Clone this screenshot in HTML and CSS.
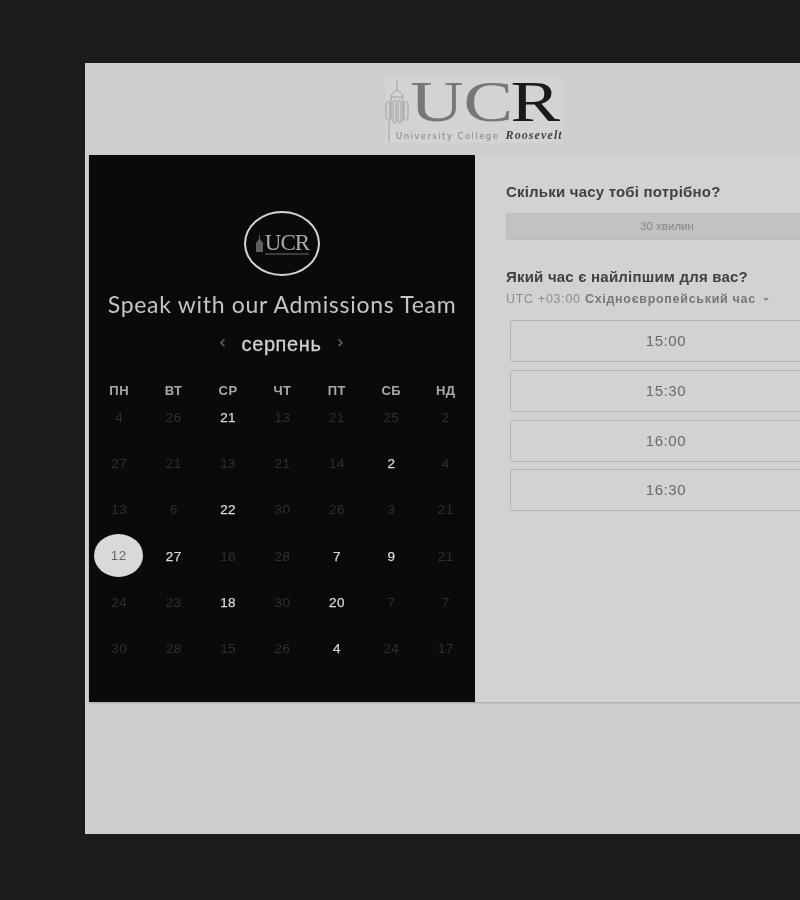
FILE: index.html
```html
<!DOCTYPE html>
<html lang="uk">
<head>
  <meta charset="UTF-8" />
  <title>Speak with our Admissions Team</title>
  <link rel="stylesheet" href="styles.css">
</head>
<body>

<div class="page">
  <div class="logo-bar">
    <div class="logo">
      <svg class="tower" width="24" height="66" viewBox="0 0 24 66" fill="none" stroke="#a0a0a0" stroke-width="1">
        <path d="M12 3V13M12 13C9 15 6 17 6 20V44M12 13C15 15 18 17 18 20V44M6 20H18"/>
        <path d="M1 28C1 23 5 23 5 28V40C5 44 1 44 1 40Z"/>
        <path d="M8 26C8 22 11 22 11 26V44C11 47 8 47 8 44Z"/>
        <path d="M13 26C13 22 16 22 16 26V44C16 47 13 47 13 44Z"/>
        <path d="M19 28C19 23 23 23 23 28V40C23 44 19 44 19 40Z"/>
        <path d="M4 44V65"/>
      </svg>
      <div class="logo-text">
        <div class="logo-letters"><span class="grey">UC</span><span class="dark">R</span></div>
        <div class="logo-sub">University College <em>Roosevelt</em></div>
      </div>
    </div>
  </div>

  <div class="card">
    <div class="left">
      <div class="badge">
        <svg class="badge-tower" width="9" height="18" viewBox="0 0 9 18" fill="#5f5f5f"><path d="M4 0H5V4L8 8V17H1V8L4 4Z"/></svg>
        <span class="badge-text">UCR</span>
      </div>
      <h2 class="team">Speak with our Admissions Team</h2>
      <div class="month">
        <span class="arrow">‹</span>
        <span class="month-name">серпень</span>
        <span class="arrow">›</span>
      </div>
      <div class="cal">
        <div class="dow">ПН</div><div class="dow">ВТ</div><div class="dow">СР</div><div class="dow">ЧТ</div><div class="dow">ПТ</div><div class="dow">СБ</div><div class="dow">НД</div>

        <div class="day">4</div><div class="day">26</div><div class="day on">21</div><div class="day">13</div><div class="day">21</div><div class="day">25</div><div class="day">2</div>
        <div class="day">27</div><div class="day">21</div><div class="day">13</div><div class="day">21</div><div class="day">14</div><div class="day on">2</div><div class="day">4</div>
        <div class="day">13</div><div class="day">6</div><div class="day on">22</div><div class="day">30</div><div class="day">26</div><div class="day">3</div><div class="day">21</div>
        <div class="day picked"><span>12</span></div><div class="day on">27</div><div class="day">16</div><div class="day">28</div><div class="day on">7</div><div class="day on">9</div><div class="day">21</div>
        <div class="day">24</div><div class="day">23</div><div class="day on">18</div><div class="day">30</div><div class="day on">20</div><div class="day">7</div><div class="day">7</div>
        <div class="day">30</div><div class="day">28</div><div class="day">15</div><div class="day">26</div><div class="day on">4</div><div class="day">24</div><div class="day">17</div>
      </div>
    </div>

    <div class="right">
      <h3 class="question">Скільки часу тобі потрібно?</h3>
      <div class="duration">30 хвилин</div>
      <h3 class="question second">Який час є найліпшим для вас?</h3>
      <div class="zone">UTC +03:00 <b>Східноєвропейський час</b><i class="caret"></i></div>
      <div class="times">
        <div class="time">15:00</div>
        <div class="time">15:30</div>
        <div class="time">16:00</div>
        <div class="time">16:30</div>
      </div>
    </div>
  </div>
</div>

</body>
</html>
```

FILE: styles.css
```css
html, body { margin: 0; height: 900px; overflow: hidden; }
body { background: #1c1c1c; font-family: "Liberation Sans", Arial, sans-serif; padding: 63px 0 0 85px; box-sizing: border-box; }

.page { width: 778px; height: 771px; background: #cecece; padding: 0 4px; box-sizing: border-box; filter: blur(0.5px); }

.logo-bar { height: 92px; display: flex; justify-content: center; padding-top: 14px; box-sizing: border-box; }
.logo { width: 178px; height: 66px; background: #d3d3d3; display: flex; }
.tower { flex: none; }
.logo-text { display: flex; flex-direction: column; margin-left: -13px; }
.logo-letters { font-family: "Liberation Serif", serif; font-size: 58px; line-height: 50px; height: 52px; padding-left: 14px; white-space: nowrap; transform: scaleX(1.28); transform-origin: 14px 0; }
.logo-letters .grey { color: #777; }
.logo-letters .dark { color: #1a1a1a; margin-left: -2px; }
.logo-sub { font-family: "DejaVu Sans", sans-serif; font-size: 8.5px; color: #858585; letter-spacing: 1.45px; line-height: 12px; white-space: nowrap; }
.logo-sub em { font-family: "Liberation Serif", serif; font-size: 12px; font-weight: bold; color: #444; letter-spacing: 1.1px; margin-left: 2px; }

.card { display: flex; height: 547px; box-shadow: 0 1px 2px rgba(0,0,0,0.2); }
.left { width: 386px; flex: none; background: #0a0a0a; padding-top: 56px; box-sizing: border-box; display: flex; flex-direction: column; align-items: center; }
.right { flex: 1; background: #d2d2d2; padding: 28px 0 0 31px; }

.badge { width: 72px; height: 61px; border: 2.5px solid #d4d4d4; border-radius: 50%; display: flex; align-items: center; justify-content: center; gap: 1px; }
.badge-text { font-family: "Liberation Serif", serif; font-size: 23px; line-height: 20px; color: #a9a9a9; letter-spacing: -1px; border-bottom: 2px solid #3c3c3c; }
.team { margin: 14px 0 0; font-family: Lato, sans-serif; font-weight: 400; font-size: 23px; line-height: 28px; color: #c4c4c4; letter-spacing: 0.7px; white-space: nowrap; }
.month { display: flex; align-items: center; gap: 15px; margin-top: 12px; height: 28px; padding-right: 1px; }
.month-name { font-size: 20px; color: #d0d0d0; letter-spacing: 0.6px; -webkit-text-stroke: 0.3px #d0d0d0; }
.arrow { font-size: 17px; line-height: 20px; color: #626262; width: 8px; margin-top: -4px; text-align: center; -webkit-text-stroke: 0.4px #626262; }

.cal { width: 381px; margin: 22px 0 0 1px; display: grid; grid-template-columns: repeat(7, 1fr); grid-template-rows: 21px repeat(6, 46.4px); }
.dow { font-size: 13px; font-weight: bold; color: #a8a8a8; text-align: center; line-height: 22px; letter-spacing: 0.5px; }
.day { font-size: 13.5px; letter-spacing: 0.4px; color: #303030; display: flex; align-items: center; justify-content: center; height: 28px; margin-top: 2px; }
.day.on { color: #d8d8d8; -webkit-text-stroke: 0.25px #d8d8d8; }
.day.picked span { width: 49px; height: 43px; border-radius: 50%; background: #d9d9d9; color: #666; display: flex; align-items: center; justify-content: center; flex: none; margin: -2px 0 0 -1px; }

.question { margin: 0; font-size: 15px; line-height: 18px; font-weight: bold; color: #414141; white-space: nowrap; letter-spacing: 0.2px; }
.question.second { margin-top: 28px; }
.duration { margin-top: 12px; height: 27px; width: 322px; background: #c2c2c2; border: 1px solid #bbb; border-radius: 3px; box-sizing: border-box; font-size: 11.5px; color: #858585; text-align: center; line-height: 25px; }
.zone { font-size: 12.5px; color: #8c8c8c; line-height: 16px; margin-top: 5px; white-space: nowrap; letter-spacing: 0.7px; }
.zone b { color: #777; }
.caret { display: inline-block; border: 3.5px solid transparent; border-top-color: #888; border-bottom: 0; margin: 0 0 2px 7px; }

.times { margin: 13px 0 0 4px; display: flex; flex-direction: column; gap: 7.8px; }
.time { height: 42px; width: 312px; border: 1px solid #b4b4b4; border-radius: 3px; box-sizing: border-box; font-size: 15px; color: #6a6a6a; letter-spacing: 0.6px; text-align: center; line-height: 40px; }
```
